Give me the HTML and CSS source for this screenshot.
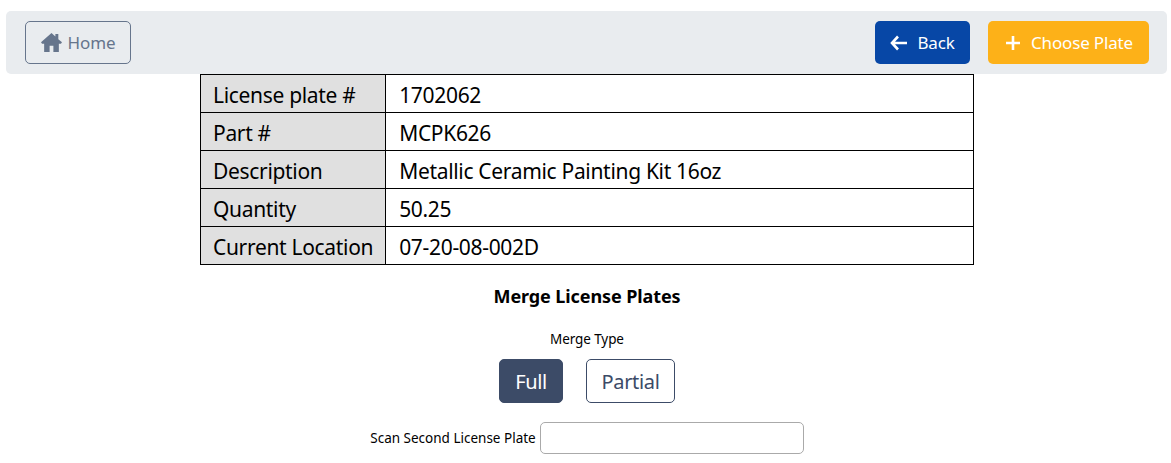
FILE: index.html
```html
<!DOCTYPE html>
<html lang="en">
<head>
    <meta charset="UTF-8">
    <meta name="viewport" content="width=device-width, initial-scale=1.0">
    <title>Merge License Plates</title>
    <link rel="stylesheet" href="styles.css">
</head>
<body>
    <nav class="navbar">
        <a class="btn btn-home">
            <svg class="icon-home" viewBox="0 0 20 18" aria-hidden="true"><path fill="currentColor" d="M10 0L0 8.800l1 1.400h2V18h5.200v-6h3.600v6H17v-7.800h2l1-1.400-3.500-3V1h-2.800v2.400z"/></svg>
            Home
        </a>
        <div class="nav-right">
            <a class="btn btn-back">
                <svg class="icon" viewBox="0 0 18 18" aria-hidden="true"><path d="M8 2.500L2 9l6 6.500M2.500 9H17" fill="none" stroke="currentColor" stroke-width="2.600"/></svg>
                Back
            </a>
            <a class="btn btn-choose">
                <svg class="icon" viewBox="0 0 18 18" aria-hidden="true"><path d="M9 2v14M2 9h14" fill="none" stroke="currentColor" stroke-width="2.600"/></svg>
                Choose Plate
            </a>
        </div>
    </nav>

    <table class="plate-table">
        <tr><th>License plate #</th><td>1702062</td></tr>
        <tr><th>Part #</th><td>MCPK626</td></tr>
        <tr><th>Description</th><td>Metallic Ceramic Painting Kit 16oz</td></tr>
        <tr><th>Quantity</th><td>50.25</td></tr>
        <tr><th>Current Location</th><td>07-20-08-002D</td></tr>
    </table>

    <div class="merge-form">
        <h1 class="title">Merge License Plates</h1>
        <p class="merge-label">Merge Type</p>
        <div class="merge-types">
            <button class="type type-full active">Full</button>
            <button class="type type-partial">Partial</button>
        </div>
        <div class="scan-row">
            <label class="scan-label" for="scan">Scan Second License Plate</label>
            <input class="scan-input" id="scan" type="text">
        </div>
    </div>
</body>
</html>
```

FILE: styles.css
```css
* {
    box-sizing: border-box;
}

body {
    margin: 0;
    padding: 11px 4px 0 6px;
    font-family: "Noto Sans", "Open Sans", sans-serif;
    color: #000;
    background: #fff;
}

.navbar {
    height: 63px;
    padding: 10px 18px 10px 19px;
    display: flex;
    justify-content: space-between;
    background: #e9ecef;
    border-radius: 5px;
}

.nav-right {
    display: flex;
    gap: 18px;
}

.btn {
    height: 43px;
    display: flex;
    align-items: center;
    justify-content: center;
    font-size: 17px;
    letter-spacing: -.15px;
    border-radius: 5px;
    border: 1px solid transparent;
}

.btn-home {
    width: 106px;
    gap: 6px;
    color: #66758c;
    border-color: #66758c;
}

.icon-home {
    width: 21px;
    height: 19px;
}

.btn-back {
    width: 95px;
    gap: 9px;
    color: #fff;
    background: #0747a6;
}

.btn-choose {
    width: 161px;
    gap: 9px;
    color: #fff;
    background: #fdb118;
}

.icon {
    width: 18px;
    height: 18px;
}

.plate-table {
    width: 774px;
    margin: 0 0 0 194px;
    border-collapse: collapse;
    font-size: 21px;
    letter-spacing: -.32px;
}

.plate-table th,
.plate-table td {
    height: 38px;
    padding: 2px 12px 0 12px;
    border: 1px solid #000;
    font-weight: normal;
    text-align: left;
    white-space: nowrap;
}

.plate-table th {
    width: 183px;
    background: #e0e0e0;
}

.plate-table td {
    padding-left: 13px;
}

.merge-form {
    padding-left: 1px;
}

.title {
    margin: 19px 0 0;
    font-size: 18px;
    line-height: 24px;
    text-align: center;
    font-weight: bold;
    letter-spacing: -.1px;
}

.merge-label {
    margin: 22px 0 0;
    font-size: 13.5px;
    line-height: 18px;
    text-align: center;
    letter-spacing: -.1px;
}

.merge-types {
    margin-top: 11px;
    display: flex;
    justify-content: center;
    gap: 23px;
}

.type {
    height: 44px;
    padding: 0;
    font-family: inherit;
    font-size: 20px;
    letter-spacing: -.35px;
    color: #3c4b67;
    background: #fff;
    border: 1px solid #3c4b67;
    border-radius: 5px;
}

.type-full {
    width: 64px;
}

.type-partial {
    width: 89px;
}

.type.active {
    color: #fff;
    background: #3c4b67;
}

.scan-row {
    margin-top: 19px;
    display: flex;
    justify-content: center;
    align-items: center;
    gap: 4px;
}

.scan-label {
    font-size: 13.5px;
}

.scan-input {
    width: 264px;
    height: 32px;
    border: 1px solid #aaa;
    border-radius: 5px;
    background: #fff;
}
```
